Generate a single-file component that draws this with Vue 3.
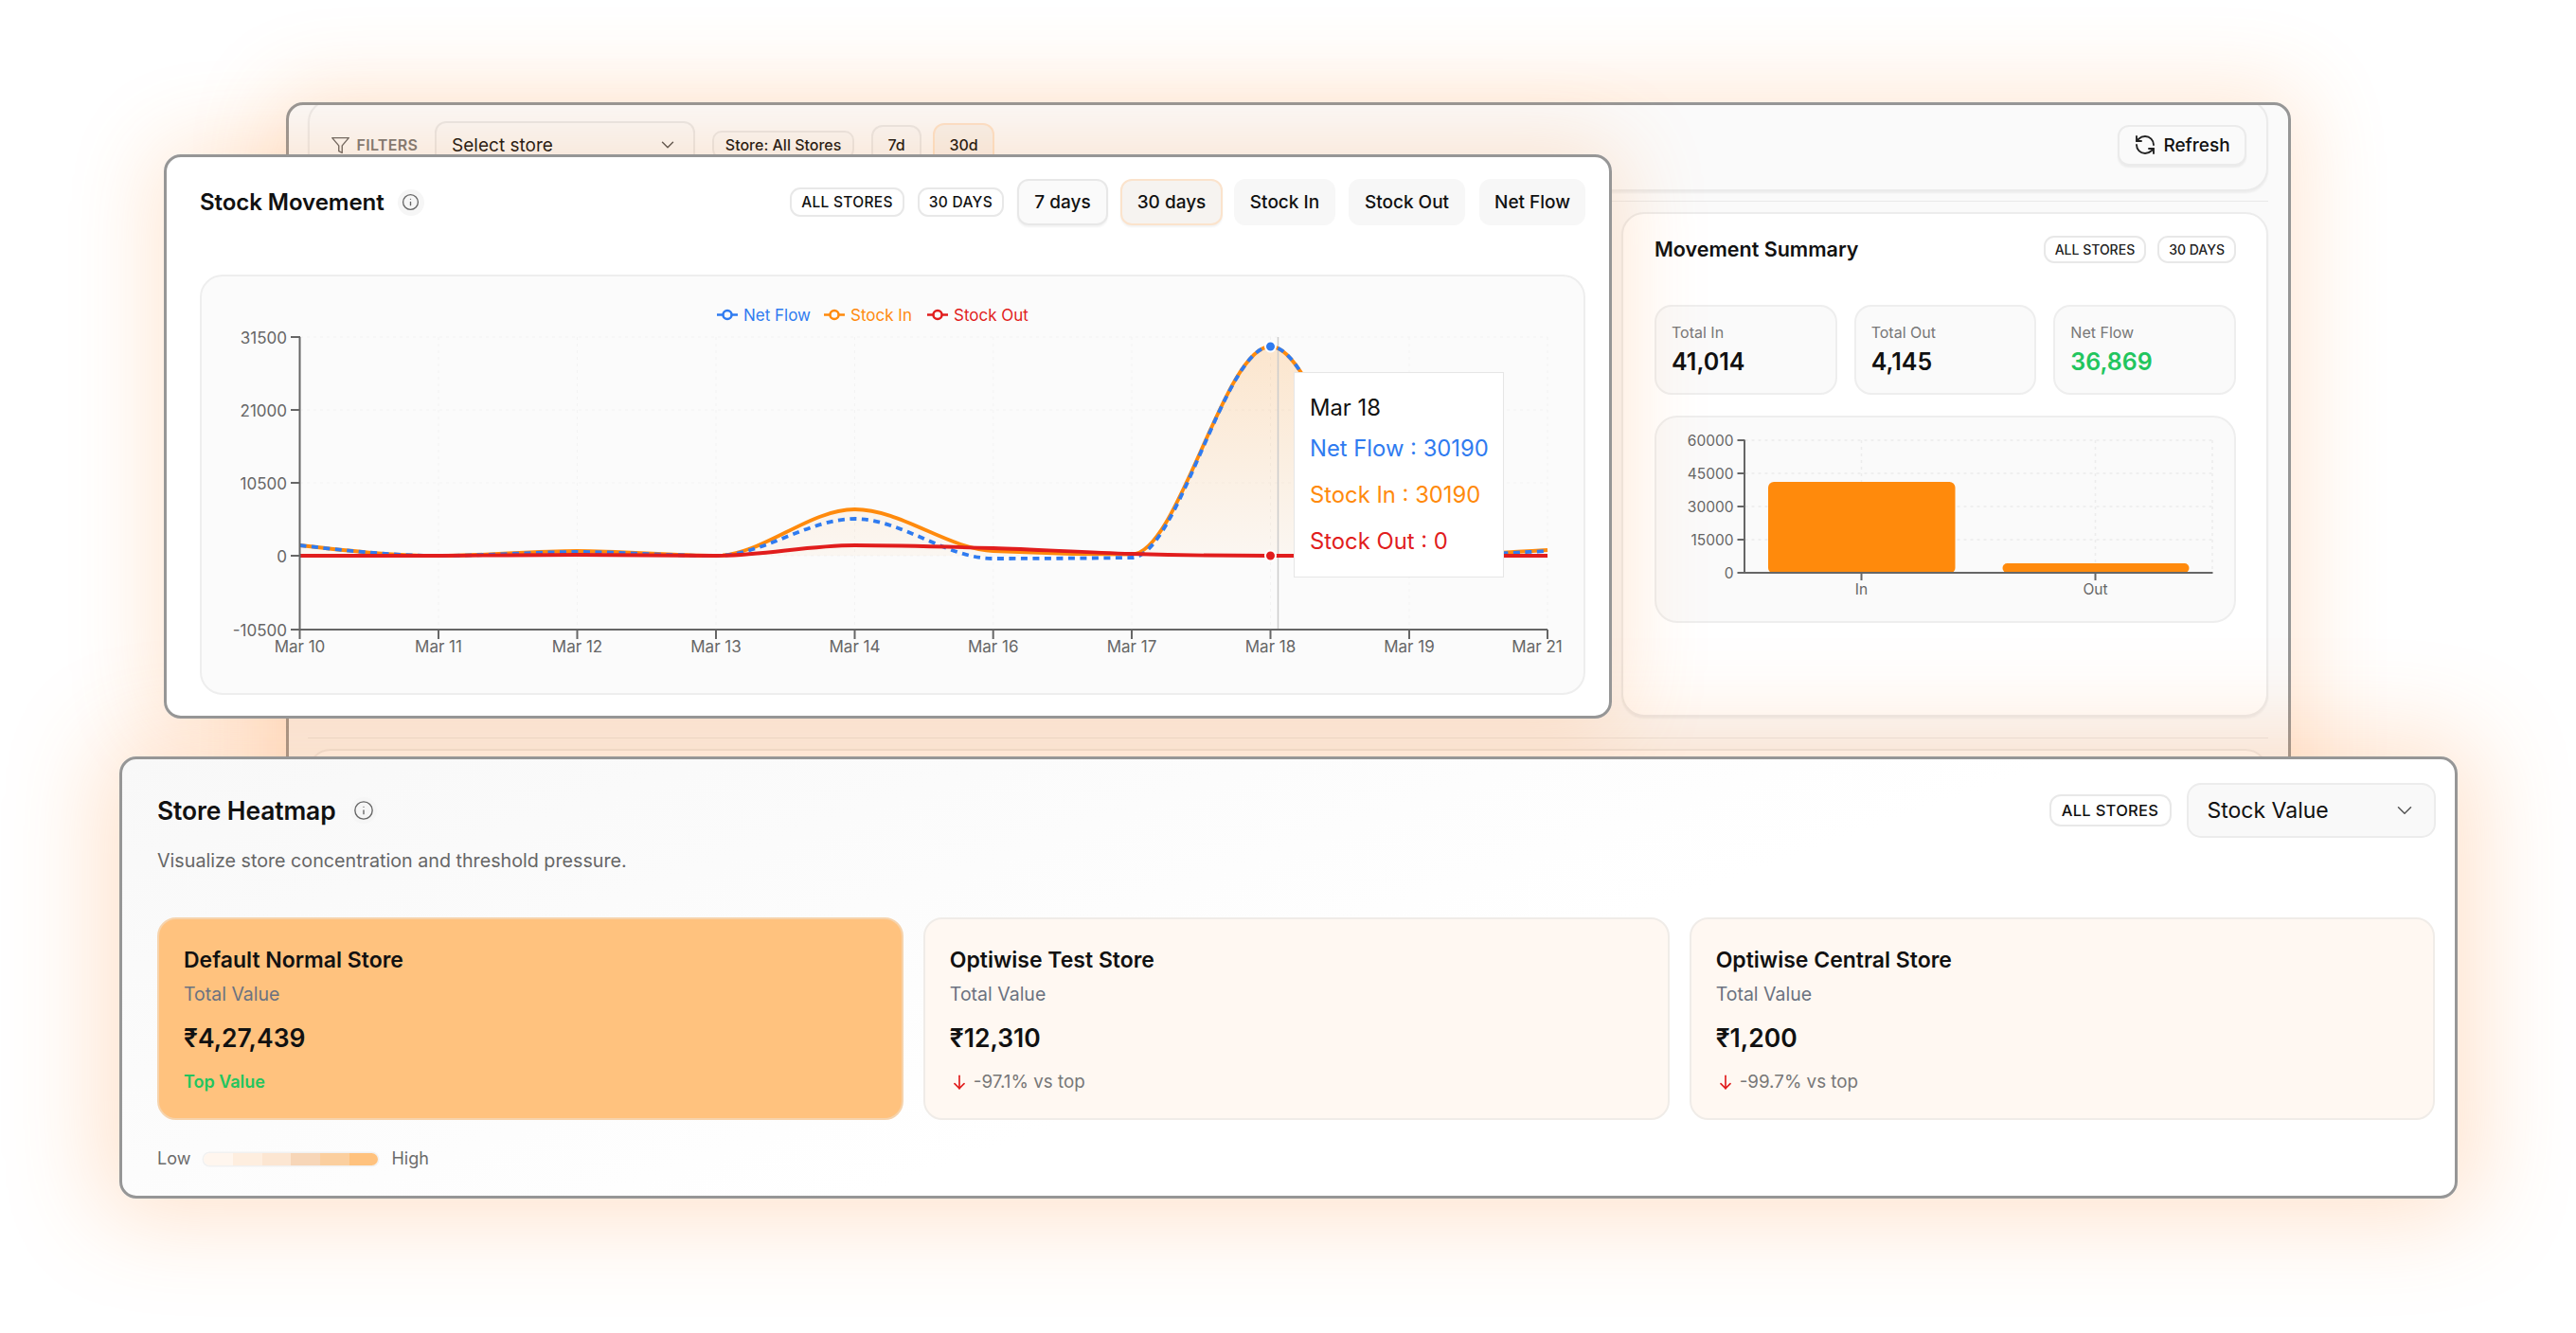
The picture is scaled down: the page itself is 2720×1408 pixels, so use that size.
<script setup>
const px = [316.5, 463, 609.5, 756, 902.5, 1048.7, 1195, 1341.5, 1488, 1634]
const labels = ['Mar 10', 'Mar 11', 'Mar 12', 'Mar 13', 'Mar 14', 'Mar 16', 'Mar 17', 'Mar 18', 'Mar 19', 'Mar 21']
const inY = [576, 587, 582, 587, 538, 582, 585.5, 366, 587, 581]
const outY = [587, 587, 586, 587, 576, 579, 585, 587, 587, 587]
const netY = [576, 587, 583, 587, 548, 590, 589, 366, 587, 582]

function slope3(x0, y0, x1, y1, x2, y2) {
  const h0 = x1 - x0
  const h1 = x2 - x1
  const s0 = (y1 - y0) / h0
  const s1 = (y2 - y1) / h1
  const p = (s0 * h1 + s1 * h0) / (h0 + h1)
  return (Math.sign(s0) + Math.sign(s1)) * Math.min(Math.abs(s0), Math.abs(s1), 0.5 * Math.abs(p)) || 0
}
function monotone(xs, ys) {
  const n = xs.length
  const t = new Array(n).fill(0)
  for (let i = 1; i < n - 1; i++) t[i] = slope3(xs[i - 1], ys[i - 1], xs[i], ys[i], xs[i + 1], ys[i + 1])
  t[0] = (3 * (ys[1] - ys[0]) / (xs[1] - xs[0]) - t[1]) / 2
  t[n - 1] = (3 * (ys[n - 1] - ys[n - 2]) / (xs[n - 1] - xs[n - 2]) - t[n - 2]) / 2
  let d = `M${xs[0]},${ys[0]}`
  for (let i = 0; i < n - 1; i++) {
    const dx = (xs[i + 1] - xs[i]) / 3
    d += `C${xs[i] + dx},${ys[i] + dx * t[i]} ${xs[i + 1] - dx},${ys[i + 1] - dx * t[i + 1]} ${xs[i + 1]},${ys[i + 1]}`
  }
  return d
}
const inPath = monotone(px, inY)
const outPath = monotone(px, outY)
const netPath = monotone(px, netY)
const areaPath = `${inPath}L1634,587L316.5,587Z`

const yTicks = [
  { y: 356, t: '31500' },
  { y: 433, t: '21000' },
  { y: 510, t: '10500' },
  { y: 587, t: '0' },
  { y: 665, t: '-10500' }
]
const legend = [
  { x: 757, tx: 785, c: '#2f7bf0', t: 'Net Flow' },
  { x: 870, tx: 898, c: '#ff8a0c', t: 'Stock In' },
  { x: 979, tx: 1007, c: '#e11d1d', t: 'Stock Out' }
]
const barTicks = [
  { y: 465, t: '60000' },
  { y: 500, t: '45000' },
  { y: 535, t: '30000' },
  { y: 570, t: '15000' },
  { y: 605, t: '0' }
]
const stats = [
  { l: 'Total In', v: '41,014', c: '' },
  { l: 'Total Out', v: '4,145', c: '' },
  { l: 'Net Flow', v: '36,869', c: 'green' }
]
const stores = [
  { n: 'Default Normal Store', v: '₹4,27,439', top: true },
  { n: 'Optiwise Test Store', v: '₹12,310', d: '-97.1% vs top' },
  { n: 'Optiwise Central Store', v: '₹1,200', d: '-99.7% vs top' }
]
const scale = ['#fff6ee', '#feeedf', '#fce6d2', '#f7d6b8', '#fbcf9f', '#ffc27e']
</script>

<template>
  <div class="stage">
    <!-- back window -->
    <section class="back">
      <div class="filterbar">
        <svg class="ficon" viewBox="0 0 24 24"><polygon points="22 3 2 3 10 12.46 10 19 14 21 14 12.46 22 3" /></svg>
        <span class="flabel">FILTERS</span>
        <div class="fselect"><span>Select store</span>
          <svg class="chev" viewBox="0 0 24 24"><path d="m6 9 6 6 6-6" /></svg>
        </div>
        <span class="fchip c1">Store: All Stores</span>
        <span class="fchip c2">7d</span>
        <span class="fchip c3">30d</span>
        <button class="refresh">
          <svg viewBox="0 0 24 24">
            <path d="M21 12a9 9 0 0 0-9-9 9.75 9.75 0 0 0-6.74 2.74L3 8" /><path d="M3 3v5h5" />
            <path d="M3 12a9 9 0 0 0 9 9 9.75 9.75 0 0 0 6.74-2.74L21 16" /><path d="M16 16h5v5" />
          </svg>
          Refresh
        </button>
      </div>
      <div class="rule r1"></div>
      <div class="backrow">
        <div class="slot"></div>
        <div class="summary">
          <div class="sumhead">
            <h3>Movement Summary</h3>
            <div class="chips">
              <span class="pill small">ALL STORES</span>
              <span class="pill small">30 DAYS</span>
            </div>
          </div>
          <div class="stats">
            <div v-for="s in stats" :key="s.l" class="stat">
              <div class="slabel">{{ s.l }}</div>
              <div class="sval" :class="s.c">{{ s.v }}</div>
            </div>
          </div>
          <div class="barpanel">
            <svg width="610" height="215" viewBox="1748.5 441 610 215">
              <g class="grid bargrid">
                <line x1="1842" x2="2336" y1="465" y2="465" /><line x1="1842" x2="2336" y1="500" y2="500" />
                <line x1="1842" x2="2336" y1="535" y2="535" /><line x1="1842" x2="2336" y1="570" y2="570" />
                <line x1="1965" x2="1965" y1="465" y2="605" /><line x1="2212" x2="2212" y1="465" y2="605" />
                <line x1="2335.5" x2="2335.5" y1="465" y2="605" />
              </g>
              <path fill="#ff8a0c" d="M1866.5,600V515a6,6 0 0 1 6,-6H2058a6,6 0 0 1 6,6V600a5,5 0 0 1 -5,5H1871.5a5,5 0 0 1 -5,-5Z" />
              <path fill="#ff8a0c" d="M2114,600a5,5 0 0 1 5,-5H2306a5,5 0 0 1 5,5v0a5,5 0 0 1 -5,5H2119a5,5 0 0 1 -5,-5Z" />
              <g class="axis">
                <line x1="1841.5" x2="1841.5" y1="465" y2="606" /><line x1="1841" x2="2336" y1="605" y2="605" />
                <line v-for="t in barTicks" :key="t.t" x1="1834" x2="1842" :y1="t.y" :y2="t.y" />
                <line x1="1965" x2="1965" y1="605" y2="613" /><line x1="2212" x2="2212" y1="605" y2="613" />
              </g>
              <text v-for="t in barTicks" :key="'l' + t.t" class="tick" x="1830" :y="t.y + 6" text-anchor="end">{{ t.t }}</text>
              <text class="tick" x="1965" y="628" text-anchor="middle">In</text>
              <text class="tick" x="2212" y="628" text-anchor="middle">Out</text>
            </svg>
          </div>
        </div>
      </div>
      <div class="rule r2"></div>
      <div class="nextcard"></div>
    </section>

    <!-- orange glows cast by the two front cards -->
    <div class="glow g1"></div>
    <div class="glow g2"></div>

    <!-- heatmap -->
    <section class="heat">
      <div class="hhead">
        <div class="titlewrap htitle">
          <h2>Store Heatmap</h2>
          <span class="info">
            <svg viewBox="0 0 24 24"><circle cx="12" cy="12" r="10" /><path d="M12 16v-4" /><path d="M12 8h.01" /></svg>
          </span>
        </div>
        <div class="hright">
          <span class="pill mid">ALL STORES</span>
          <div class="hselect"><span>Stock Value</span>
            <svg class="chev" viewBox="0 0 24 24"><path d="m6 9 6 6 6-6" /></svg>
          </div>
        </div>
      </div>
      <p class="sub">Visualize store concentration and threshold pressure.</p>
      <div class="stores">
        <div v-for="s in stores" :key="s.n" class="store" :class="{ hot: s.top }">
          <div class="sname">{{ s.n }}</div>
          <div class="stv">Total Value</div>
          <div class="smoney">{{ s.v }}</div>
          <div v-if="s.top" class="topv">Top Value</div>
          <div v-else class="delta">
            <svg viewBox="0 0 24 24"><path d="M12 4v16" /><path d="m18 14-6 6-6-6" /></svg>
            <span>{{ s.d }}</span>
          </div>
        </div>
      </div>
      <div class="legendrow">
        <span>Low</span>
        <div class="scale"><i v-for="c in scale" :key="c" :style="{ background: c }"></i></div>
        <span>High</span>
      </div>
    </section>

    <!-- stock movement -->
    <section class="stock">
      <div class="shead">
        <div class="titlewrap">
          <h2 class="stitle">Stock Movement</h2>
          <span class="info">
            <svg viewBox="0 0 24 24"><circle cx="12" cy="12" r="10" /><path d="M12 16v-4" /><path d="M12 8h.01" /></svg>
          </span>
        </div>
        <div class="controls">
          <span class="pill">ALL STORES</span>
          <span class="pill">30 DAYS</span>
          <button class="tbtn b7">7 days</button>
          <button class="tbtn active b30">30 days</button>
          <button class="tbtn flat bin">Stock In</button>
          <button class="tbtn flat bout">Stock Out</button>
          <button class="tbtn flat bnet">Net Flow</button>
        </div>
      </div>
      <div class="chart">
        <svg width="1459" height="438" viewBox="213 292 1459 438">
          <defs>
            <linearGradient id="af" x1="0" y1="0" x2="0" y2="1">
              <stop offset="0" stop-color="#ff8a0c" stop-opacity="0.19" />
              <stop offset="1" stop-color="#ff8a0c" stop-opacity="0.04" />
            </linearGradient>
          </defs>
          <g class="grid">
            <line v-for="t in yTicks" :key="t.t" x1="317" x2="1634" :y1="t.y" :y2="t.y" />
            <line v-for="x in px" :key="x" :x1="x" :x2="x" y1="356" y2="665" />
          </g>
          <g v-for="l in legend" :key="l.t">
            <line :x1="l.x" :x2="l.x + 22" y1="332.5" y2="332.5" :stroke="l.c" stroke-width="2.5" />
            <circle :cx="l.x + 11" cy="332.5" r="4.5" fill="#fbfbfb" :stroke="l.c" stroke-width="2.5" />
            <text class="ltext" :x="l.tx" y="338.5" :fill="l.c">{{ l.t }}</text>
          </g>
          <path :d="areaPath" fill="url(#af)" />
          <line x1="1349.5" x2="1349.5" y1="356" y2="665" stroke="#ccc" stroke-width="1.5" />
          <path :d="inPath" class="ln" stroke="#ff8a0c" />
          <path :d="netPath" class="ln dash" stroke="#2f7bf0" />
          <path :d="outPath" class="ln" stroke="#e11d1d" />
          <circle cx="1341.5" cy="366" r="5.5" fill="#2f7bf0" stroke="#fff" stroke-width="2" />
          <circle cx="1341.5" cy="587" r="5.5" fill="#e11d1d" stroke="#fff" stroke-width="2" />
          <g class="axis">
            <line x1="316.5" x2="316.5" y1="356" y2="666" /><line x1="316" x2="1634" y1="665" y2="665" />
            <line v-for="t in yTicks" :key="'t' + t.t" x1="307" x2="317" :y1="t.y" :y2="t.y" />
            <line v-for="x in px" :key="'v' + x" :x1="x" :x2="x" y1="665" y2="675" />
          </g>
          <text v-for="t in yTicks" :key="'l' + t.t" class="tick big" x="303" :y="t.y + 6.5" text-anchor="end">{{ t.t }}</text>
          <text v-for="(l, i) in labels" :key="l" class="tick big" :x="i === 9 ? 1623 : px[i]" y="689" text-anchor="middle">{{ l }}</text>
        </svg>
        <div class="tip">
          <div class="tdate">Mar 18</div>
          <div class="tline blue">Net Flow : 30190</div>
          <div class="tline orange">Stock In : 30190</div>
          <div class="tline red">Stock Out : 0</div>
        </div>
      </div>
    </section>
  </div>
</template>

<style>
html, body { margin: 0; background: #fff; }
</style>

<style scoped>
.stage {
  position: relative;
  width: 2720px;
  height: 1408px;
  overflow: hidden;
  background: #fff;
  font-family: Inter, "Liberation Sans", sans-serif;
  color: #111;
}
h2, h3, p { margin: 0; }
svg { display: block; }

/* ---- windows on the canvas ---- */
.back, .stock, .heat, .glow {
  position: absolute;
  box-sizing: border-box;
  border-radius: 18px;
}
.back {
  left: 301.5px; top: 107.5px; width: 2117px; height: 900px;
  border: 3px solid #969696;
  background: #fafafa;
  padding: 0 20.5px 0 20px;
  overflow: hidden;
  z-index: 1;
  box-shadow: 0 0 90px 14px rgba(255, 140, 50, .2);
}
.glow { pointer-events: none; z-index: 2; }
.g1 { left: 173px; top: 163px; width: 1529px; height: 596px; box-shadow: 0 0 90px 10px rgba(255, 140, 50, .22); }
.g2 { left: 125.5px; top: 799px; width: 2469px; height: 466.5px; box-shadow: 0 0 100px 20px rgba(255, 140, 50, .25); }
.stock {
  left: 173px; top: 163px; width: 1529px; height: 596px;
  border: 3px solid #969696;
  background: #fff;
  padding: 23px 25px 22px 35px;
  z-index: 4;
}
.heat {
  left: 125.5px; top: 799px; width: 2469px; height: 466.5px;
  border: 3px solid #969696;
  background: linear-gradient(160deg, #f8f8f8 0%, #fbfbfb 25%, #fff 55%);
  padding: 25px 20px 0 37.5px;
  z-index: 3;
}

/* ---- back window ---- */
.filterbar {
  box-sizing: border-box;
  height: 97px;
  margin-top: -6px;
  border: 2px solid #ebebeb;
  border-radius: 24px;
  background: #fafafa;
  box-shadow: 0 2px 2px rgba(0, 0, 0, .05);
  padding: 0 21px 0 22px;
  display: flex;
  align-items: center;
  gap: 18px;
}
.ficon { width: 21px; height: 21px; fill: none; stroke: #666; stroke-width: 1.6; stroke-linejoin: round; margin-right: -10px; flex: none; }
.flabel { font-size: 16px; font-weight: 600; color: #777; letter-spacing: .3px; margin-left: -1px; }
.fselect {
  box-sizing: border-box; width: 275px; height: 50px; flex: none;
  border: 2px solid #e8e8e8; border-radius: 12px; background: #f9f9f9;
  padding: 0 16px; display: flex; align-items: center; justify-content: space-between;
  font-size: 19px;
}
.chev { width: 22px; height: 22px; fill: none; stroke: #555; stroke-width: 1.6; stroke-linecap: round; stroke-linejoin: round; }
.fchip {
  box-sizing: border-box; display: flex; align-items: center; justify-content: center;
  border: 2px solid #e8e8e8; background: #f8f8f8; border-radius: 12px;
  font-size: 16px; font-weight: 500; flex: none;
}
.c1 { width: 150px; height: 30px; border-radius: 10px; }
.c2 { width: 53px; height: 42px; }
.c3 { width: 65px; height: 46px; margin-left: -6px; border-color: #fbe3cc; background: #f6f2ee; }
.refresh {
  margin-left: auto; box-sizing: border-box; width: 136px; height: 43px;
  border: 2px solid #ebebeb; border-radius: 12px; background: #fafafa;
  box-shadow: 0 2px 2px rgba(0, 0, 0, .06);
  font: 500 19px Inter, sans-serif; color: #111;
  display: flex; align-items: center; justify-content: center; gap: 7px; padding: 0;
}
.refresh svg { width: 24px; height: 24px; fill: none; stroke: #222; stroke-width: 1.9; stroke-linecap: round; stroke-linejoin: round; }
.rule { height: 1px; background: #e9e9e9; }
.r1 { margin-top: 10px; }
.r2 { margin-top: 22px; }
.backrow { margin-top: 11px; display: grid; grid-template-columns: 1fr 683px; }
.summary {
  box-sizing: border-box; height: 533px;
  border: 2px solid #ececec; border-radius: 24px;
  background: #fff;
  box-shadow: 0 2px 2px rgba(0, 0, 0, .05);
  padding: 23px 32px 0 33px;
}
.sumhead { display: flex; align-items: center; justify-content: space-between; }
.sumhead h3 { font-size: 21.5px; font-weight: 600; }
.chips { display: flex; gap: 12px; }
.stats { margin-top: 44px; display: grid; grid-template-columns: repeat(3, 1fr); gap: 18px; }
.stat {
  box-sizing: border-box; height: 95px; border: 2px solid #eee; border-radius: 18px;
  background: #fafafa; padding: 16px 0 0 16px;
}
.slabel { font-size: 16px; line-height: 22px; color: #777; }
.sval { margin-top: 4px; font-size: 25px; line-height: 32px; font-weight: 600; color: #111; }
.sval.green { color: #22c55e; }
.barpanel {
  margin-top: 22px; box-sizing: border-box; height: 219px;
  border: 2px solid #eee; border-radius: 24px; background: #fafafa;
}
.nextcard {
  margin-top: 11px; height: 200px; border: 2px solid #ececec; border-radius: 24px;
  background: #fff;
}

/* ---- shared ---- */
.titlewrap { display: flex; align-items: center; gap: 14px; }
h2 { font-size: 26.4px; font-weight: 600; letter-spacing: -.1px; }
h2.stitle { font-size: 24.1px; }
.info {
  width: 28px; height: 28px; border-radius: 50%; background: #f6f6f6;
  display: flex; align-items: center; justify-content: center;
}
.info svg { width: 19px; height: 19px; fill: none; stroke: #666; stroke-width: 1.7; stroke-linecap: round; }
.htitle { gap: 15px; }
.htitle .info svg { width: 22px; height: 22px; stroke-width: 1.5; }
.pill {
  box-sizing: border-box; display: flex; align-items: center; justify-content: center;
  height: 31px; padding: 0 10px; border: 2px solid #e8e8e8; border-radius: 11px;
  background: #fff; font-size: 15.5px; font-weight: 500; letter-spacing: .3px;
  white-space: nowrap;
}
.pill.small { height: 29px; font-size: 14px; letter-spacing: 0; padding: 0 10px; color: #222; }
.pill.mid { height: 34px; width: 129px; padding: 0; font-size: 16.5px; border-radius: 12px; }

/* ---- stock card ---- */
.shead { display: flex; align-items: center; justify-content: space-between; height: 49px; }
.controls { display: flex; align-items: center; gap: 14px; }
.tbtn {
  box-sizing: border-box; height: 49px; padding: 0; border: 2px solid #e8e8e8; border-radius: 12px;
  background: #fafafa; font: 500 19px Inter, sans-serif; color: #111;
  box-shadow: 0 2px 2px rgba(0, 0, 0, .05);
}
.b7 { width: 96px; }
.b30 { width: 108px; margin-left: -1px; }
.bin { width: 107px; margin-left: -2px; }
.bout { width: 123px; }
.bnet { width: 112px; margin-left: 1px; }
.tbtn.active { background: #f6f3f0; border-color: #fbe3cc; }
.tbtn.flat { border-color: #f7f7f7; background: #f7f7f7; box-shadow: none; }
.chart {
  position: relative; margin-top: 52px; box-sizing: border-box; height: 443.5px;
  border: 2px solid #eee; border-radius: 24px; background: #fbfbfb;
}
.grid line { stroke: #f3f3f3; stroke-width: 1; stroke-dasharray: 3 4; }
.bargrid line { stroke: #ececec; stroke-width: 1.5; }
.axis line { stroke: #666; stroke-width: 2; }
.tick { font-size: 15.5px; fill: #666; font-family: Inter, sans-serif; }
.tick.big { font-size: 17px; }
.ltext { font-size: 17px; font-family: Inter, sans-serif; }
.ln { fill: none; stroke-width: 3.8; }
.ln.dash { stroke-dasharray: 7 5.5; }
.tip {
  position: absolute; left: 1153px; top: 101px; box-sizing: border-box;
  width: 222px; height: 217px; background: #fff; border: 1.5px solid #e6e6e6;
  padding: 22px 0 0 16px; font-size: 23.8px; white-space: nowrap;
}
.tdate { line-height: 29px; color: #111; margin-bottom: 14px; }
.tline { line-height: 29px; margin-bottom: 20px; }
.blue { color: #2f7bf0; }
.orange { color: #ff8a0c; }
.red { color: #e11d1d; }

/* ---- heatmap ---- */
.hhead { display: flex; align-items: center; justify-content: space-between; height: 58px; }
.hright { display: flex; align-items: center; gap: 16px; }
.hselect {
  box-sizing: border-box; width: 263px; height: 58px; border: 2px solid #ececec; border-radius: 15px;
  background: #f9f9f9; padding: 0 18px 0 20px; display: flex; align-items: center; justify-content: space-between;
  font-size: 23px;
}
.hselect .chev { width: 26px; height: 26px; stroke-width: 1.4; }
.sub { margin-top: 10px; font-size: 19.7px; line-height: 28px; color: #666; }
.stores { margin-top: 46px; display: grid; grid-template-columns: repeat(3, 1fr); gap: 21px; }
.store {
  box-sizing: border-box; height: 214px; border: 2px solid #f0ece8; border-radius: 20px;
  background: #fff8f2; padding: 28px 0 0 26px;
}
.store.hot { background: #ffc27e; border-color: #f6d3ac; }
.sname { font-size: 23px; line-height: 30px; font-weight: 600; }
.stv { margin-top: 8px; font-size: 19.5px; line-height: 26px; color: #6b7280; }
.smoney { margin-top: 15px; font-size: 26.5px; line-height: 36px; font-weight: 600; }
.topv { margin-top: 17px; font-size: 18px; line-height: 24px; font-weight: 600; color: #22c55e; }
.delta { margin-top: 17px; display: flex; align-items: center; gap: 5px; font-size: 18.8px; line-height: 24px; color: #777; }
.delta svg { width: 20px; height: 20px; fill: none; stroke: #e11d1d; stroke-width: 2; stroke-linecap: round; stroke-linejoin: round; }
.legendrow { margin-top: 30px; display: flex; align-items: center; gap: 14px; font-size: 18px; line-height: 22px; color: #6b6b6b; }
.scale { display: flex; width: 184px; height: 13px; border-radius: 7px; overflow: hidden; box-shadow: 0 0 0 1.5px #f1f1f1; }
.scale i { flex: 1; }
</style>
